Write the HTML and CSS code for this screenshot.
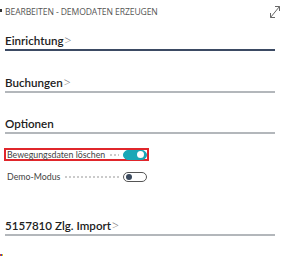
FILE: index.html
```html
<!DOCTYPE html>
<html lang="de">

<head>
  <meta charset="UTF-8">
  <meta name="viewport" content="width=device-width, initial-scale=1.0">
  <title>Bearbeiten - Demodaten erzeugen</title>
  <link rel="stylesheet" href="styles.css">
</head>

<body>
  <div class="dialog">
    <span class="edge-mark"></span>
    <div class="header">
      <span class="title">Bearbeiten - Demodaten erzeugen</span>
      <svg class="expand" width="12" height="14" viewBox="0 0 12 14">
        <path d="M1.5 12.5 L10.5 1.5" stroke="#666" stroke-width="1" fill="none" />
        <path d="M1.5 8 L1.5 12.5 L6 12.5" stroke="#666" stroke-width="1" fill="none" />
        <path d="M6 1.5 L10.5 1.5 L10.5 6" stroke="#666" stroke-width="1" fill="none" />
      </svg>
    </div>

    <div class="section first">
      <div class="heading active">Einrichtung<span class="chev">&gt;</span></div>
    </div>

    <div class="section">
      <div class="heading">Buchungen<span class="chev">&gt;</span></div>
    </div>

    <div class="section options">
      <div class="heading">Optionen</div>
      <div class="fields">
        <div class="field highlighted">
          <span class="label">Bewegungsdaten löschen</span>
          <span class="leader"></span>
          <span class="toggle on"><span class="knob"></span></span>
        </div>
        <div class="field">
          <span class="label">Demo-Modus</span>
          <span class="leader"></span>
          <span class="toggle"><span class="knob"></span></span>
        </div>
      </div>
    </div>

    <div class="section last">
      <div class="heading">5157810 Zlg. Import<span class="chev">&gt;</span></div>
    </div>
    <span class="corner-mark"><i class="r"></i><i class="b"></i><i class="y"></i></span>
  </div>
</body>

</html>
```

FILE: styles.css
```css
body {
  margin: 0;
  background-color: #fff;
  font-family: "Open Sans", "Noto Sans", sans-serif;
  color: #212121;
}

.dialog {
  position: relative;
  width: 283px;
  height: 257px;
  box-sizing: border-box;
  padding: 0 8px 0 5px;
}

.edge-mark {
  position: absolute;
  left: 0;
  top: 9px;
  width: 2px;
  height: 3px;
  background-color: #333;
}

.corner-mark {
  position: absolute;
  left: 0;
  top: 254px;
  display: flex;
}

.corner-mark i {
  width: 1px;
  height: 2px;
}

.corner-mark .r {
  background-color: #e53935;
}

.corner-mark .b {
  background-color: #1e5fd6;
}

.corner-mark .y {
  background-color: #f4c20d;
}

.header {
  height: 24px;
  display: flex;
  align-items: center;
  justify-content: space-between;
}

.title {
  text-transform: uppercase;
  font-size: 8.6px;
  color: #555;
  letter-spacing: -0.1px;
}

.expand {
  margin-right: -6px;
}

.section {
  margin-top: 24px;
}

.section.first {
  margin-top: 9px;
}

.section.options {
  margin-top: 23px;
}

.section.last {
  margin-top: 35px;
}

.heading {
  font-family: Lato, "Open Sans", sans-serif;
  font-size: 11.6px;
  font-weight: 600;
  line-height: 16px;
  color: #212121;
  border-bottom: 2px solid #b3b7bb;
}

.heading.active {
  border-bottom-color: #3b4a63;
}

.chev {
  font-family: "Open Sans", sans-serif;
  font-size: 12px;
  font-weight: 300;
  color: #777;
  margin-left: 1px;
}

.fields {
  margin-top: 14px;
  display: flex;
  flex-direction: column;
  gap: 9px;
}

.field {
  display: flex;
  align-items: center;
  width: 145px;
  height: 13px;
  box-sizing: border-box;
  padding-left: 1px;
  border: 2px solid transparent;
  margin-left: -1px;
}

.field.highlighted {
  border-color: #e0262b;
}

.label {
  font-family: Lato, "Open Sans", sans-serif;
  font-size: 8.8px;
  color: #444;
  white-space: nowrap;
}

.leader {
  flex: 1;
  height: 2px;
  margin: 0 4px;
  background-image: radial-gradient(circle, #b8b8b8 0.6px, transparent 1px);
  background-size: 4px 2px;
  background-repeat: repeat-x;
}

.toggle {
  width: 24px;
  height: 10px;
  box-sizing: border-box;
  border-radius: 5px;
  border: 1px solid #555;
  background-color: #fff;
  display: flex;
  align-items: center;
  padding: 0 2px;
}

.toggle .knob {
  width: 6px;
  height: 6px;
  border-radius: 50%;
  background-color: #3b4a5e;
}

.toggle.on {
  border-color: #1aa7b6;
  background-color: #1aa7b6;
  justify-content: flex-end;
}

.toggle.on .knob {
  background-color: #fff;
  width: 7px;
  height: 7px;
}
```
